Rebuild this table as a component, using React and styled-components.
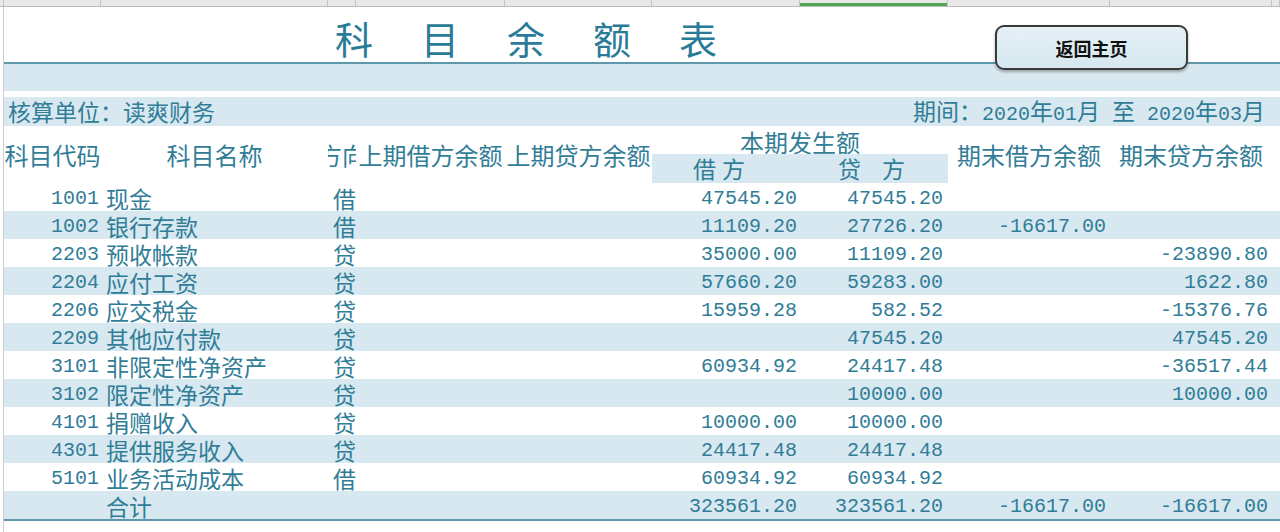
import React from 'react';
import styled, { createGlobalStyle } from 'styled-components';

const CJK = `"Noto Sans CJK SC", "Noto Sans", sans-serif`;
const MONO = `"Liberation Mono", "Noto Sans CJK SC", monospace`;
const TEAL = '#317d97';
const TITLE = '#2a7b97';
const BAND = '#d7e8f0';
const RULE = '#5f98ad';
const COLS = '97px 227px 28px 149px 147px 148px 148px 162px 162px 1fr';

const GlobalStyle = createGlobalStyle`
  html, body { margin: 0; padding: 0; background: #fff; }
  body { font-family: ${CJK}; overflow: hidden; }
`;

const Page = styled.div`
  width: 1280px;
  height: 532px;
  position: relative;
  overflow: hidden;
  display: flex;
  flex-direction: column;
`;

const ColumnStrip = styled.div`
  height: 6px;
  flex: 0 0 auto;
  background: #e8e8e8;
  border-bottom: 1px solid #bcbcbc;
  display: grid;
  grid-template-columns: 4px ${COLS};
`;

const ColHead = styled.div`
  border-right: 1px solid #c4c4c4;
  box-sizing: border-box;
  box-shadow: ${p => (p.$selected ? 'inset 0 -3px 0 #4fa552' : 'none')};
`;

const Sheet = styled.div`
  flex: 1;
  display: flex;
  flex-direction: column;
  margin-left: 3px;
  border-left: 1px solid #cdcdcd;
`;

const TitleRow = styled.div`
  height: 55px;
  display: flex;
  align-items: center;
  padding: 6px 0 0 331px;
  box-sizing: border-box;
`;

const Title = styled.h1`
  margin: 0;
  font-family: ${CJK};
  font-weight: 400;
  font-size: 38px;
  line-height: 1;
  letter-spacing: 48px;
  color: ${TITLE};
`;

const Rule = styled.div`
  height: 2px;
  background: ${RULE};
`;

const Band = styled.div`
  height: ${p => p.$h}px;
  background: ${p => (p.$blue ? BAND : '#fff')};
`;

const InfoRow = styled.div`
  height: 29px;
  background: ${BAND};
  display: flex;
  align-items: center;
  justify-content: space-between;
  padding: 0 15px 0 4px;
  font-size: 23px;
  color: ${TEAL};
  line-height: 1;
`;

const Mono = styled.span`
  font-family: ${MONO};
  font-size: 20px;
`;

const Spacer = styled.span`
  display: inline-block;
  width: ${p => p.$w}px;
`;

const HeaderGrid = styled.div`
  display: grid;
  grid-template-columns: ${COLS};
  grid-template-rows: 28px 29px;
  font-size: 24px;
  color: ${TEAL};
  line-height: 1;
`;

const HeadCell = styled.div`
  grid-row: 1 / span 2;
  display: flex;
  align-items: center;
  justify-content: center;
  padding-top: 1px;
  white-space: nowrap;
  overflow: hidden;
`;

const ClipText = styled.span`
  flex-shrink: 0;
`;

const GroupHead = styled.div`
  grid-column: 6 / span 2;
  grid-row: 1;
  display: flex;
  align-items: center;
  justify-content: center;
  padding-top: 4px;
`;

const SubHead = styled.div`
  grid-row: 2;
  background: ${BAND};
  display: flex;
  align-items: center;
  padding-left: ${p => p.$pl}px;
  gap: ${p => p.$gap}px;
  font-size: 23px;
`;

const Row = styled.div`
  display: grid;
  grid-template-columns: ${COLS};
  height: 28px;
  background: ${p => (p.$blue ? BAND : '#fff')};
  color: ${TEAL};
  align-items: center;
`;

const Code = styled.div`
  font-family: ${MONO};
  font-size: 20px;
  line-height: 1;
  text-align: right;
  padding-right: 2px;
  padding-top: 3px;
`;

const Name = styled.div`
  font-size: 23px;
  padding-left: 5px;
  white-space: nowrap;
  line-height: 1;
  padding-top: 3px;
`;

const Num = styled.div`
  font-family: ${MONO};
  font-size: 20px;
  line-height: 1;
  text-align: right;
  padding-right: ${p => p.$pr}px;
  padding-top: 3px;
`;

const HomeButton = styled.button`
  position: absolute;
  left: 995px;
  top: 25px;
  width: 193px;
  height: 45px;
  border: 2px solid #3a3a3a;
  border-radius: 9px;
  background: linear-gradient(#e6f1f6, #d5e7ef);
  box-shadow: 0 2px 3px rgba(0, 0, 0, 0.3);
  font-family: ${CJK};
  font-weight: 700;
  font-size: 18px;
  color: #111;
  padding: 0;
  cursor: pointer;
`;

const rows = [
  ['1001', '现金', '借', '47545.20', '47545.20', '', ''],
  ['1002', '银行存款', '借', '11109.20', '27726.20', '-16617.00', ''],
  ['2203', '预收帐款', '贷', '35000.00', '11109.20', '', '-23890.80'],
  ['2204', '应付工资', '贷', '57660.20', '59283.00', '', '1622.80'],
  ['2206', '应交税金', '贷', '15959.28', '582.52', '', '-15376.76'],
  ['2209', '其他应付款', '贷', '', '47545.20', '', '47545.20'],
  ['3101', '非限定性净资产', '贷', '60934.92', '24417.48', '', '-36517.44'],
  ['3102', '限定性净资产', '贷', '', '10000.00', '', '10000.00'],
  ['4101', '捐赠收入', '贷', '10000.00', '10000.00', '', ''],
  ['4301', '提供服务收入', '贷', '24417.48', '24417.48', '', ''],
  ['5101', '业务活动成本', '借', '60934.92', '60934.92', '', ''],
  ['', '合计', '', '323561.20', '323561.20', '-16617.00', '-16617.00'],
];

const colWidths = [97, 227, 28, 149, 147, 148, 148, 162, 162, 8];

export default function App() {
  return (
    <Page>
      <GlobalStyle />
      <ColumnStrip>
        <ColHead />
        {colWidths.map((w, i) => (
          <ColHead key={i} $selected={i === 6} />
        ))}
      </ColumnStrip>
      <Sheet>
        <TitleRow>
          <Title>科目余额表</Title>
        </TitleRow>
        <Rule />
        <Band $h={27} $blue />
        <Band $h={6} />
        <InfoRow>
          <span>核算单位：读爽财务</span>
          <span>
            期间：<Mono>2020</Mono>年<Mono>01</Mono>月<Spacer $w={12} />至<Spacer $w={12} />
            <Mono>2020</Mono>年<Mono>03</Mono>月
          </span>
        </InfoRow>
        <HeaderGrid>
          <HeadCell>科目代码</HeadCell>
          <HeadCell>科目名称</HeadCell>
          <HeadCell>
            <ClipText>方向</ClipText>
          </HeadCell>
          <HeadCell>上期借方余额</HeadCell>
          <HeadCell>上期贷方余额</HeadCell>
          <GroupHead>本期发生额</GroupHead>
          <SubHead $pl={41} $gap={6}>
            <span>借</span>
            <span>方</span>
          </SubHead>
          <SubHead $pl={38} $gap={21}>
            <span>贷</span>
            <span>方</span>
          </SubHead>
          <HeadCell>期末借方余额</HeadCell>
          <HeadCell>期末贷方余额</HeadCell>
        </HeaderGrid>
        {rows.map((r, i) => (
          <Row key={i} $blue={i % 2 === 1}>
            <Code>{r[0]}</Code>
            <Name>{r[1]}</Name>
            <Name>{r[2]}</Name>
            <Num $pr={0} />
            <Num $pr={0} />
            <Num $pr={3}>{r[3]}</Num>
            <Num $pr={5}>{r[4]}</Num>
            <Num $pr={4}>{r[5]}</Num>
            <Num $pr={4}>{r[6]}</Num>
            <div />
          </Row>
        ))}
        <Rule />
      </Sheet>
      <HomeButton>返回主页</HomeButton>
    </Page>
  );
}
